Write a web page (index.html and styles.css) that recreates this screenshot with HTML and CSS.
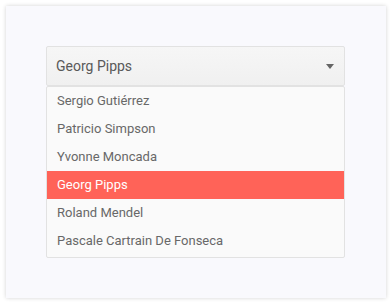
FILE: index.html
```html
<!DOCTYPE html>
<html>
<head>
<meta charset="utf-8">
<link rel="stylesheet" href="styles.css">
</head>
<body>
<div class="card">
  <div class="dropdown">
    <div class="select">
      <span class="value">Georg Pipps</span>
      <svg class="arrow" width="8" height="5" viewBox="0 0 8 5"><path d="M0 0H8L4 5Z" fill="#656565"/></svg>
    </div>
    <ul class="list">
      <li>Sergio Gutiérrez</li>
      <li>Patricio Simpson</li>
      <li>Yvonne Moncada</li>
      <li class="selected">Georg Pipps</li>
      <li>Roland Mendel</li>
      <li>Pascale Cartrain De Fonseca</li>
    </ul>
  </div>
</div>
</body>
</html>
```
FILE: styles.css
```css
html, body {
  margin: 0;
  padding: 0;
  background: #ffffff;
}
body {
  padding: 6px;
  font-family: Roboto, "Noto Sans", sans-serif;
}
.card {
  width: 380px;
  height: 292px;
  box-sizing: border-box;
  background: #f9f9fd;
  box-shadow: 0 0 4px rgba(0,0,0,0.18);
  padding: 40px;
}
.dropdown {
  width: 299px;
}
.select {
  height: 40px;
  box-sizing: border-box;
  border: 1px solid #e2e2e2;
  border-radius: 2px;
  background: linear-gradient(#f6f6f6, #f0f0f0);
  display: flex;
  align-items: center;
  justify-content: space-between;
  padding: 0 10px 0 9px;
  color: #595959;
  font-size: 14px;
}
.arrow {
  display: block;
  margin-top: 1px;
}
.list {
  list-style: none;
  margin: 0;
  padding: 0 0 2px;
  border: 1px solid #e2e2e2;
  border-radius: 2px;
  background: #fafafa;
  color: #686868;
  font-size: 13px;
}
.list li {
  height: 28px;
  line-height: 28px;
  padding-left: 10px;
}
.list li.selected {
  background: #ff6358;
  color: #fff;
}
```
